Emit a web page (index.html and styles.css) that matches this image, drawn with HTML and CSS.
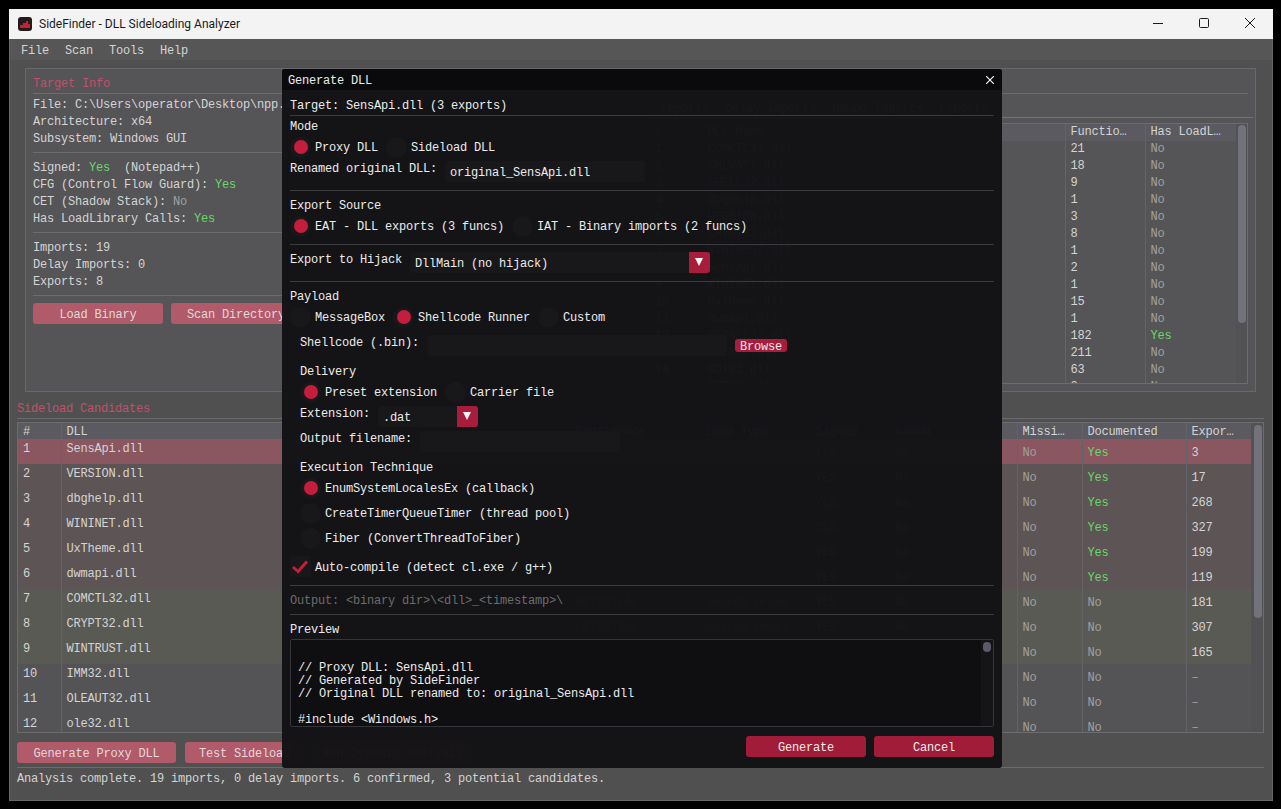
FILE: index.html
```html
<!DOCTYPE html>
<html lang="en">
<head>
    <meta charset="UTF-8">
    <meta name="viewport" content="width=device-width, initial-scale=1.0">
    <title>SideFinder - DLL Sideloading Analyzer</title>
    <link rel="stylesheet" href="styles.css">
</head>
<body>
    <div class="window">
        <div class="titlebar">
            <svg class="app-icon" viewBox="0 0 14 14"><rect width="14" height="14" rx="3" fill="#241a1c"/><path d="M2 11V8h3V6h3V4h2v3h2v4z" fill="#c8202f"/></svg>
            <span class="app-title">SideFinder - DLL Sideloading Analyzer</span>
            <div class="winbtn"><svg viewBox="0 0 10 10"><path d="M0 5.5h10"/></svg></div>
            <div class="winbtn"><svg viewBox="0 0 10 10"><rect x="0.5" y="0.5" width="9" height="9" rx="1"/></svg></div>
            <div class="winbtn"><svg viewBox="0 0 10 10"><path d="M0 0l10 10M10 0L0 10"/></svg></div>
        </div>

        <div class="app">
            <div class="menubar">
                <span>File</span>
                <span>Scan</span>
                <span>Tools</span>
                <span>Help</span>
            </div>

            <div class="main">
                <div class="top-panel">
                    <div class="info-pane">
                        <div class="heading">Target Info</div>
                        <div class="rule mt1"></div>
                        <div class="text mt2">File: C:\Users\operator\Desktop\npp.8.6\notepad++.exe</div>
                        <div class="text">Architecture: x64</div>
                        <div class="text">Subsystem: Windows GUI</div>
                        <div class="rule mt5"></div>
                        <div class="text mt6">Signed: <span class="yes">Yes</span>&nbsp; (Notepad++)</div>
                        <div class="text">CFG (Control Flow Guard): <span class="yes">Yes</span></div>
                        <div class="text">CET (Shadow Stack): <span class="no">No</span></div>
                        <div class="text">Has LoadLibrary Calls: <span class="yes">Yes</span></div>
                        <div class="rule mt5"></div>
                        <div class="text mt6">Imports: 19</div>
                        <div class="text">Delay Imports: 0</div>
                        <div class="text">Exports: 8</div>
                        <div class="rule mt5"></div>
                        <div class="btn-row mt7">
                            <div class="btn w130">Load Binary</div>
                            <div class="btn w130">Scan Directory</div>
                        </div>
                    </div>

                    <div class="imports-pane">
                        <div class="heading">PE Analysis</div>
                        <div class="rule mt1"></div>
                        <div class="tabs mt6">
                            <span>Imports</span>
                            <span>Delay Imports</span>
                            <span>Bound Imports</span>
                            <span>Exports</span>
                        </div>
                        <div class="tab-line"></div>
                        <div class="table-box imports-box">
                            <div class="table-scroll">
                                <table class="imports">
                                    <colgroup><col class="i-num"><col class="i-name"><col class="i-func"><col class="i-load"></colgroup>
                                    <tr class="head"><td>#</td><td>DLL Name</td><td>Functio…</td><td>Has LoadL…</td></tr>
                                    <tr><td>1</td><td>COMCTL32.dll</td><td>21</td><td class="no">No</td></tr>
                                    <tr><td>2</td><td>SHLWAPI.dll</td><td>18</td><td class="no">No</td></tr>
                                    <tr><td>3</td><td>SHELL32.dll</td><td>9</td><td class="no">No</td></tr>
                                    <tr><td>4</td><td>dbghelp.dll</td><td>1</td><td class="no">No</td></tr>
                                    <tr><td>5</td><td>VERSION.dll</td><td>3</td><td class="no">No</td></tr>
                                    <tr><td>6</td><td>CRYPT32.dll</td><td>8</td><td class="no">No</td></tr>
                                    <tr><td>7</td><td>WINTRUST.dll</td><td>1</td><td class="no">No</td></tr>
                                    <tr><td>8</td><td>SensApi.dll</td><td>2</td><td class="no">No</td></tr>
                                    <tr><td>9</td><td>WININET.dll</td><td>1</td><td class="no">No</td></tr>
                                    <tr><td>10</td><td>UxTheme.dll</td><td>15</td><td class="no">No</td></tr>
                                    <tr><td>11</td><td>dwmapi.dll</td><td>1</td><td class="no">No</td></tr>
                                    <tr><td>12</td><td>KERNEL32.dll</td><td>182</td><td class="yes">Yes</td></tr>
                                    <tr><td>13</td><td>USER32.dll</td><td>211</td><td class="no">No</td></tr>
                                    <tr><td>14</td><td>GDI32.dll</td><td>63</td><td class="no">No</td></tr>
                                    <tr><td>15</td><td>IMM32.dll</td><td>2</td><td class="no">No</td></tr>
                                </table>
                            </div>
                            <div class="gutter"><div class="thumb imports-thumb"></div></div>
                        </div>
                    </div>
                </div>

                <div class="heading mt8">Sideload Candidates</div>
                <div class="rule mt1"></div>

                <div class="table-box candidates-box mt3">
                    <div class="table-scroll">
                        <table class="candidates">
                            <colgroup><col class="c-num"><col class="c-dll"><col class="c-conf"><col class="c-type"><col class="c-sign"><col class="c-arch"><col class="c-miss"><col class="c-doc"><col class="c-exp"></colgroup>
                            <tr class="head"><td>#</td><td>DLL</td><td>Confidence</td><td>Load Type</td><td>Signed</td><td>Known</td><td>Missi…</td><td>Documented</td><td>Expor…</td></tr>
                            <tr class="picked"><td class="up">1</td><td class="up">SensApi.dll</td><td class="red">CONFIRMED</td><td class="red">Search Order</td><td>YES</td><td>No</td><td class="no">No</td><td class="yes">Yes</td><td>3</td></tr>
                            <tr class="hit"><td class="up">2</td><td class="up">VERSION.dll</td><td class="red">CONFIRMED</td><td class="red">Search Order</td><td>YES</td><td>No</td><td class="no">No</td><td class="yes">Yes</td><td>17</td></tr>
                            <tr class="hit"><td class="up">3</td><td class="up">dbghelp.dll</td><td class="red">CONFIRMED</td><td class="red">Search Order</td><td>YES</td><td>No</td><td class="no">No</td><td class="yes">Yes</td><td>268</td></tr>
                            <tr class="hit"><td class="up">4</td><td class="up">WININET.dll</td><td class="red">CONFIRMED</td><td class="red">Search Order</td><td>YES</td><td>No</td><td class="no">No</td><td class="yes">Yes</td><td>327</td></tr>
                            <tr class="hit"><td class="up">5</td><td class="up">UxTheme.dll</td><td class="red">CONFIRMED</td><td class="red">Search Order</td><td>YES</td><td>No</td><td class="no">No</td><td class="yes">Yes</td><td>199</td></tr>
                            <tr class="hit"><td class="up">6</td><td class="up">dwmapi.dll</td><td class="red">CONFIRMED</td><td class="red">Search Order</td><td>YES</td><td>No</td><td class="no">No</td><td class="yes">Yes</td><td>119</td></tr>
                            <tr class="maybe"><td class="up">7</td><td class="up">COMCTL32.dll</td><td class="amber">POTENTIAL</td><td class="amber">Search Order</td><td>YES</td><td>No</td><td class="no">No</td><td class="no">No</td><td>181</td></tr>
                            <tr class="maybe"><td class="up">8</td><td class="up">CRYPT32.dll</td><td class="amber">POTENTIAL</td><td class="amber">Search Order</td><td>YES</td><td>No</td><td class="no">No</td><td class="no">No</td><td>307</td></tr>
                            <tr class="maybe"><td class="up">9</td><td class="up">WINTRUST.dll</td><td class="amber">POTENTIAL</td><td class="amber">Search Order</td><td>YES</td><td>No</td><td class="no">No</td><td class="no">No</td><td>165</td></tr>
                            <tr><td class="up">10</td><td class="up">IMM32.dll</td><td></td><td></td><td></td><td></td><td class="no">No</td><td class="no">No</td><td class="no">–</td></tr>
                            <tr><td class="up">11</td><td class="up">OLEAUT32.dll</td><td></td><td></td><td></td><td></td><td class="no">No</td><td class="no">No</td><td class="no">–</td></tr>
                            <tr><td class="up">12</td><td class="up">ole32.dll</td><td></td><td></td><td></td><td></td><td class="no">No</td><td class="no">No</td><td class="no">–</td></tr>
                        </table>
                    </div>
                    <div class="gutter wide"><div class="thumb candidates-thumb"></div></div>
                </div>

                <div class="btn-row bottom-actions mt9">
                    <div class="btn w159">Generate Proxy DLL</div>
                    <div class="btn w119">Test Sideload</div>
                    <div class="btn w159">Run Dynamic Analysis</div>
                </div>
                <div class="rule mt4"></div>
                <div class="text mt2">Analysis complete. 19 imports, 0 delay imports. 6 confirmed, 3 potential candidates.</div>
            </div>

            <div class="modal">
                <div class="modal-title">
                    <span>Generate DLL</span>
                    <svg class="modal-close" viewBox="0 0 8 8"><path d="M0 0l8 8M8 0L0 8"/></svg>
                </div>
                <div class="modal-body">
                    <div class="text">Target: SensApi.dll (3 exports)</div>
                    <div class="mrule mt1"></div>
                    <div class="text mt2">Mode</div>
                    <div class="radios mt2">
                        <div class="radio"><i class="dot on"></i>Proxy DLL</div>
                        <div class="radio"><i class="dot"></i>Sideload DLL</div>
                    </div>
                    <div class="field mt3">
                        <label>Renamed original DLL:</label>
                        <div class="input w200">original_SensApi.dll</div>
                    </div>
                    <div class="mrule mt8"></div>
                    <div class="text mt6">Export Source</div>
                    <div class="radios mt2">
                        <div class="radio"><i class="dot on"></i>EAT - DLL exports (3 funcs)</div>
                        <div class="radio"><i class="dot"></i>IAT - Binary imports (2 funcs)</div>
                    </div>
                    <div class="mrule mt7"></div>
                    <div class="field mt7">
                        <label>Export to Hijack</label>
                        <div class="input combo w300">DllMain (no hijack)<span class="arrow"></span></div>
                    </div>
                    <div class="mrule mt8"></div>
                    <div class="text mt6">Payload</div>
                    <div class="radios mt2">
                        <div class="radio"><i class="dot"></i>MessageBox</div>
                        <div class="radio"><i class="dot on"></i>Shellcode Runner</div>
                        <div class="radio"><i class="dot"></i>Custom</div>
                    </div>
                    <div class="indent">
                        <div class="field mt7">
                            <label>Shellcode (.bin):</label>
                            <div class="input w300"></div>
                            <div class="browse">Browse</div>
                        </div>
                        <div class="text mt7">Delivery</div>
                        <div class="radios mt2">
                            <div class="radio"><i class="dot on"></i>Preset extension</div>
                            <div class="radio"><i class="dot"></i>Carrier file</div>
                        </div>
                        <div class="field mt3">
                            <label>Extension:</label>
                            <div class="input combo w100">.dat<span class="arrow"></span></div>
                        </div>
                        <div class="field mt4">
                            <label>Output filename:</label>
                            <div class="input w200"></div>
                        </div>
                        <div class="text mt7">Execution Technique</div>
                        <div class="radios mt2"><div class="radio"><i class="dot on"></i>EnumSystemLocalesEx (callback)</div></div>
                        <div class="radios mt4"><div class="radio"><i class="dot"></i>CreateTimerQueueTimer (thread pool)</div></div>
                        <div class="radios mt4"><div class="radio"><i class="dot"></i>Fiber (ConvertThreadToFiber)</div></div>
                    </div>
                    <div class="radios mt7">
                        <div class="radio">
                            <svg class="checkbox" viewBox="0 0 21 21"><path d="M3 11l5 4.5L17 5.5"/></svg>
                            <span class="check-label">Auto-compile (detect cl.exe / g++)</span>
                        </div>
                    </div>
                    <div class="mrule mt8"></div>
                    <div class="text dim mt6">Output: &lt;binary dir&gt;\&lt;dll&gt;_&lt;timestamp&gt;\</div>
                    <div class="mrule mt5"></div>
                    <div class="text mt6">Preview</div>
                    <div class="code-box mt1">
                        <pre class="code">

// Proxy DLL: SensApi.dll
// Generated by SideFinder
// Original DLL renamed to: original_SensApi.dll

#include &lt;Windows.h&gt;</pre>
                        <div class="code-bar"><div class="code-thumb"></div></div>
                    </div>
                    <div class="modal-actions">
                        <div class="action">Generate</div>
                        <div class="action">Cancel</div>
                    </div>
                </div>
            </div>
        </div>
    </div>
</body>
</html>
```

FILE: styles.css
```css
* {
    box-sizing: border-box;
}

body {
    margin: 0;
    background: #000;
    font-family: "Liberation Mono", monospace;
    font-size: 12px;
    line-height: 19px;
    letter-spacing: -0.2px;
    color: #d4d4d4;
    white-space: nowrap;
    overflow: hidden;
}

.window {
    margin: 9px 0 0 9px;
    width: 1264px;
    height: 792px;
    display: flex;
    flex-direction: column;
}

/* native title bar */
.titlebar {
    height: 30px;
    flex: none;
    background: #f3f3f3;
    display: flex;
    align-items: center;
    padding-left: 9px;
    color: #1a1a1a;
    font-family: Roboto, sans-serif;
    letter-spacing: 0;
}
.app-icon {
    width: 14px;
    height: 14px;
    margin-right: 7px;
}
.app-title {
    flex: 1;
}
.winbtn {
    width: 46px;
    height: 30px;
    padding-bottom: 2px;
    display: flex;
    align-items: center;
    justify-content: center;
}
.winbtn svg {
    width: 10px;
    height: 10px;
    fill: none;
    stroke: #1a1a1a;
    stroke-width: 1;
}

.app {
    flex: 1;
    position: relative;
    display: flex;
    flex-direction: column;
    background: #505050;
    border: 1px solid #68686c;
    border-top: none;
    min-height: 0;
}

.menubar {
    height: 21px;
    flex: none;
    background: #565656;
    display: flex;
    gap: 16px;
    align-items: center;
    padding: 4px 0 0 11px;
}

.main {
    flex: 1;
    padding: 8px 8px 0 7px;
    min-height: 0;
}

.top-panel {
    height: 324px;
    margin: 0 8px;
    border: 1px solid #68686c;
    background: #555558;
    display: flex;
    overflow: hidden;
}
.info-pane {
    width: 615px;
    flex: none;
    padding: 6px 0 0 7px;
    overflow: hidden;
}
.imports-pane {
    flex: 1;
    min-width: 0;
    padding: 6px 7px 0 8px;
}

.heading {
    height: 17px;
    color: #c0506c;
}
.text {
    height: 17px;
}
.rule {
    height: 1px;
    background: #6c6c70;
}

.yes {
    color: #68d868;
}
.no {
    color: #a0a0a0;
}

.mt1 { margin-top: 1px; }
.mt2 { margin-top: 2px; }
.mt3 { margin-top: 3px; }
.mt4 { margin-top: 4px; }
.mt5 { margin-top: 5px; }
.mt6 { margin-top: 6px; }
.mt7 { margin-top: 7px; }
.mt8 { margin-top: 8px; }
.mt9 { margin-top: 9px; }

.btn-row {
    display: flex;
    gap: 8px;
}
.bottom-actions {
    gap: 9px;
}
.btn {
    height: 21px;
    line-height: 25px;
    text-align: center;
    background: #b05a6a;
    border-radius: 3px;
    color: #e6d8da;
}
.w119 { width: 119px; }
.w130 { width: 130px; }
.w159 { width: 159px; }

.tabs {
    display: flex;
    gap: 16px;
    height: 17px;
    padding-left: 11px;
}
.tab-line {
    height: 1px;
    background: #bb5068;
    margin-right: -5px;
}

.table-box {
    display: flex;
    border: 1px solid #6c6c70;
    overflow: hidden;
}
.imports-box {
    height: 261px;
    margin-top: 5px;
}
.candidates-box {
    height: 311px;
    background: #545457;
}
.table-scroll {
    flex: 1;
    min-width: 0;
    overflow: hidden;
}
.gutter {
    width: 11px;
    flex: none;
    padding: 1px 1px 0 2px;
    background: #525255;
}
.gutter.wide {
    width: 12px;
    padding-left: 3px;
}
.thumb {
    width: 8px;
    background: #72727c;
    border-radius: 4px;
}
.imports-thumb { height: 198px; }
.candidates-thumb { height: 193px; margin-top: 1px; }

table {
    width: 100%;
    table-layout: fixed;
    border-collapse: collapse;
}
td {
    padding: 0 0 0 5px;
    line-height: 17px;
    border-right: 1px solid #626268;
    overflow: hidden;
}
td:last-child {
    border-right: none;
}
.head td {
    height: 17px;
    background: #5a5a60;
}
.imports td {
    height: 17px;
}
.candidates td {
    height: 25px;
    padding-top: 4px;
    vertical-align: middle;
}
.candidates .head td {
    height: 16px;
    padding-top: 3px;
    line-height: 13px;
}
.candidates td.up {
    padding-top: 2px;
    vertical-align: top;
}

.i-num { width: 52px; }
.i-name { width: 363px; }
.i-func { width: 80px; }
.i-load { width: 91px; }

.c-num { width: 43px; }
.c-dll { width: 509px; }
.c-conf { width: 130px; }
.c-type { width: 110px; }
.c-sign { width: 80px; }
.c-arch { width: 127px; }
.c-miss { width: 65px; }
.c-doc { width: 104px; }
.c-exp { width: 65px; }

.picked td { background: #8a5660; }
.hit td { background: #5d5455; }
.maybe td { background: #5a5a55; }
.red { color: #c04050; }
.amber { color: #c0a040; }

/* Generate DLL popup */
.modal {
    position: absolute;
    left: 272px;
    top: 30px;
    width: 720px;
    height: 699px;
    background: rgba(18, 18, 21, 0.975);
    border-radius: 3px;
    color: #ececec;
    overflow: hidden;
}
.modal-title {
    height: 21px;
    padding: 4px 8px 0 6px;
    background: #0a0a0c;
    display: flex;
    align-items: center;
    justify-content: space-between;
}
.modal-close {
    width: 8px;
    height: 8px;
    margin-top: -4px;
    fill: none;
    stroke: #f0f0f0;
    stroke-width: 1.2;
}
.modal-body {
    padding: 7px 8px 0;
}
.mrule {
    height: 1px;
    background: #3a3a40;
}
.dim {
    color: #6c6c6c;
}
.indent {
    padding-left: 10px;
}

.radios {
    height: 21px;
    display: flex;
    gap: 8px;
}
.radio {
    padding-top: 2px;
    display: flex;
    align-items: center;
    gap: 4px;
}
.dot {
    width: 21px;
    height: 21px;
    margin-top: -2px;
    border-radius: 50%;
    background: #18181b;
    display: flex;
    align-items: center;
    justify-content: center;
}
.dot.on::after {
    content: "";
    width: 14px;
    height: 14px;
    margin-bottom: 1px;
    border-radius: 50%;
    background: #c41e3c;
}

.field {
    display: flex;
    gap: 8px;
    height: 21px;
}
.field label {
    line-height: 17px;
}
.input {
    height: 21px;
    line-height: 25px;
    padding-left: 5px;
    background: #18181b;
    border-radius: 3px;
}
.w100 { width: 100px; }
.w200 { width: 200px; }
.w300 { width: 300px; }
.combo {
    position: relative;
}
.arrow {
    position: absolute;
    right: 0;
    top: 0;
    width: 21px;
    height: 21px;
    background: #a81c3c;
    border-radius: 0 3px 3px 0;
}
.arrow::after {
    content: "";
    position: absolute;
    left: 6px;
    top: 6px;
    border: 4.5px solid transparent;
    border-top: 8px solid #f4f4f4;
    border-bottom: none;
}
.browse {
    align-self: center;
    height: 13px;
    line-height: 16px;
    padding: 0 5px;
    background: #a81c3c;
    border-radius: 3px;
}

.checkbox {
    width: 21px;
    height: 21px;
    margin-top: -2px;
    background: #18181b;
    border-radius: 3px;
    fill: none;
    stroke: #c41e3c;
    stroke-width: 3;
}
.check-label {
    padding-top: 2px;
}

.code-box {
    height: 88px;
    display: flex;
    border: 1px solid #34343a;
    background: #0f0f12;
    border-radius: 2px;
    overflow: hidden;
}
.code {
    flex: 1;
    margin: 0;
    padding: 9px 7px 0;
    font: inherit;
    line-height: 13px;
}
.code-bar {
    width: 12px;
    flex: none;
    padding: 2px 2px 0;
    background: #151518;
}
.code-thumb {
    width: 8px;
    height: 10px;
    border-radius: 4px;
    background: #5a5a68;
}
.modal-actions {
    margin-top: 9px;
    display: flex;
    justify-content: flex-end;
    gap: 8px;
}
.action {
    width: 120px;
    height: 21px;
    line-height: 25px;
    text-align: center;
    background: #a01c38;
    border-radius: 3px;
}
```
